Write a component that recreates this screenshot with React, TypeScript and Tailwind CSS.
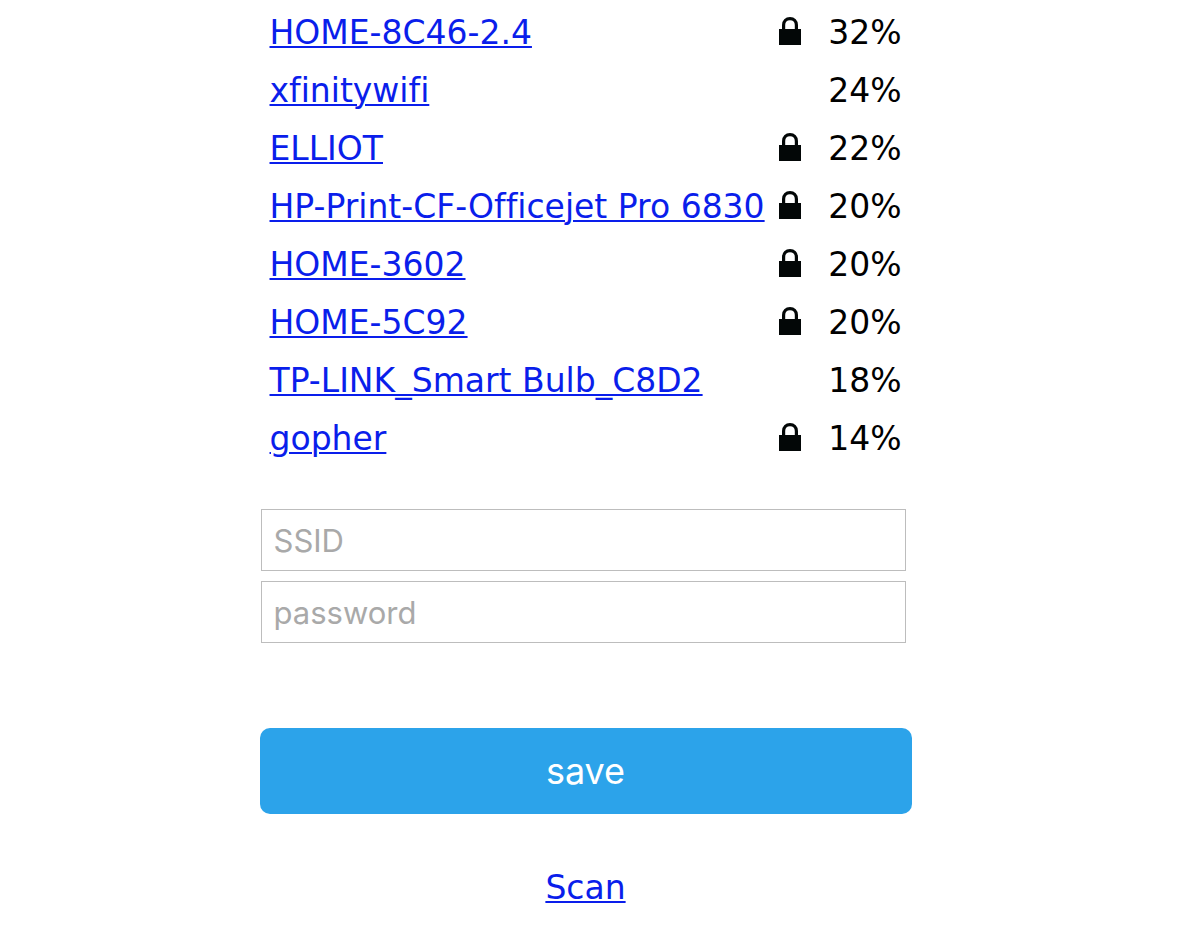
type Network = { name: string; quality: number; locked: boolean };

const networks: Network[] = [
  { name: "HOME-8C46-2.4", quality: 32, locked: true },
  { name: "xfinitywifi", quality: 24, locked: false },
  { name: "ELLIOT", quality: 22, locked: true },
  { name: "HP-Print-CF-Officejet Pro 6830", quality: 20, locked: true },
  { name: "HOME-3602", quality: 20, locked: true },
  { name: "HOME-5C92", quality: 20, locked: true },
  { name: "TP-LINK_Smart Bulb_C8D2", quality: 18, locked: false },
  { name: "gopher", quality: 14, locked: true },
];

function Lock() {
  return (
    <svg className="mb-1 h-7 w-[22px]" viewBox="0 0 22 28" role="img" aria-label="secured">
      <path d="M4.6 13V8C4.6 4 7.2 1.6 11 1.6S17.4 4 17.4 8V13" fill="none" stroke="#030707" strokeWidth="3.2" />
      <path d="M0 12H22V28H0Z" fill="#030707" />
    </svg>
  );
}

const link = "text-[#0a1eeb] underline decoration-2 underline-offset-2";
const field =
  "block h-[62px] w-full border border-[#bdbdbd] bg-white px-3 font-['Inter','Liberation_Sans',sans-serif] text-[31px] text-black placeholder:text-[#a9a9a9]";

export default function App() {
  return (
    <main className="mx-auto w-full max-w-[672px] pr-5 font-['DejaVu_Sans',Verdana,sans-serif] text-[33px] leading-[58px] text-black [font-variant-ligatures:none]">
      <ul className="px-2.5 pt-1">
        {networks.map((n) => (
          <li key={n.name} className="flex items-center">
            <a href="#ssid" className={`${link} flex-none whitespace-nowrap`}>{n.name}</a>
            <span className="ml-auto flex items-center gap-6">
              {n.locked && <Lock />}
              <span className="w-[77px] text-right">{n.quality}%</span>
            </span>
          </li>
        ))}
      </ul>
      <form onSubmit={(e) => e.preventDefault()}>
        <div className="mt-[41px] mr-1.5 ml-px space-y-2.5">
          <input id="ssid" aria-label="SSID" placeholder="SSID" className={field} />
          <input type="password" aria-label="password" placeholder="password" className={field} />
        </div>
        <button type="submit" className="mt-[85px] block h-[86px] w-full rounded-[10px] bg-[#2ca3ea] font-['Inter','Liberation_Sans',sans-serif] text-[36px] text-white">
          save
        </button>
      </form>
      <div className="mt-[45px] text-center">
        <a href="#scan" className={link}>Scan</a>
      </div>
    </main>
  );
}
